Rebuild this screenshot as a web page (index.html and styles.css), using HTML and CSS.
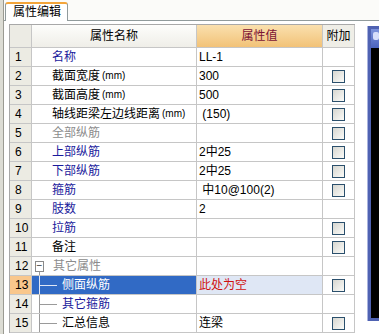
FILE: index.html
```html
<!DOCTYPE html>
<html lang="zh-CN">
<head>
    <meta charset="UTF-8">
    <title>属性编辑</title>
    <link rel="stylesheet" href="styles.css">
</head>
<body>
<div class="window">
    <div class="edge"></div>
    <div class="main">
        <div class="tabbar">
            <div class="tab">属性编辑</div>
        </div>
        <div class="panel">
            <div class="grid">
                <div class="cell head num-h"></div>
                <div class="cell head name-h">属性名称</div>
                <div class="cell head value-h">属性值</div>
                <div class="cell head extra-h">附加</div>

                <div class="cell num">1</div>
                <div class="cell name blue">名称</div>
                <div class="cell value">LL-1</div>
                <div class="cell check"></div>

                <div class="cell num">2</div>
                <div class="cell name">截面宽度<span class="unit">(mm)</span></div>
                <div class="cell value">300</div>
                <div class="cell check"><span class="box"></span></div>

                <div class="cell num">3</div>
                <div class="cell name">截面高度<span class="unit">(mm)</span></div>
                <div class="cell value">500</div>
                <div class="cell check"><span class="box"></span></div>

                <div class="cell num">4</div>
                <div class="cell name">轴线距梁左边线距离<span class="unit">(mm)</span></div>
                <div class="cell value">&nbsp;(150)</div>
                <div class="cell check"><span class="box"></span></div>

                <div class="cell num">5</div>
                <div class="cell name gray">全部纵筋</div>
                <div class="cell value"></div>
                <div class="cell check"><span class="box"></span></div>

                <div class="cell num">6</div>
                <div class="cell name blue">上部纵筋</div>
                <div class="cell value">2中25</div>
                <div class="cell check"><span class="box"></span></div>

                <div class="cell num">7</div>
                <div class="cell name blue">下部纵筋</div>
                <div class="cell value">2中25</div>
                <div class="cell check"><span class="box"></span></div>

                <div class="cell num">8</div>
                <div class="cell name blue">箍筋</div>
                <div class="cell value">&nbsp;中10@100(2)</div>
                <div class="cell check"><span class="box"></span></div>

                <div class="cell num">9</div>
                <div class="cell name blue">肢数</div>
                <div class="cell value">2</div>
                <div class="cell check"></div>

                <div class="cell num">10</div>
                <div class="cell name blue">拉筋</div>
                <div class="cell value"></div>
                <div class="cell check"><span class="box"></span></div>

                <div class="cell num">11</div>
                <div class="cell name">备注</div>
                <div class="cell value"></div>
                <div class="cell check"><span class="box"></span></div>

                <div class="cell num">12</div>
                <div class="cell name gray group"><span class="toggle">−</span>其它属性</div>
                <div class="cell value"></div>
                <div class="cell check"></div>

                <div class="cell num current">13</div>
                <div class="cell name leaf selected"><span class="branch"></span>侧面纵筋</div>
                <div class="cell value selected-value">此处为空</div>
                <div class="cell check"><span class="box"></span></div>

                <div class="cell num">14</div>
                <div class="cell name leaf blue"><span class="branch"></span>其它箍筋</div>
                <div class="cell value"></div>
                <div class="cell check"></div>

                <div class="cell num">15</div>
                <div class="cell name leaf"><span class="branch"></span>汇总信息</div>
                <div class="cell value">连梁</div>
                <div class="cell check"><span class="box"></span></div>
            </div>

            <div class="side">
                <div class="side-title"><span class="side-icon"></span></div>
                <div class="side-body"></div>
            </div>
        </div>
    </div>
</div>
</body>
</html>
```

FILE: styles.css
```css
body {
    margin: 0;
    width: 379px;
    height: 334px;
    overflow: hidden;
    background: #fff;
    font-family: "Liberation Sans", "Noto Sans CJK SC", sans-serif;
    font-size: 12px;
    color: #000;
}
.window {
    display: flex;
    height: 334px;
}
.edge {
    width: 3px;
    background: #dcdcd4;
    border-right: 1px solid #9a9a92;
}
.main {
    flex: 1;
    display: flex;
    flex-direction: column;
}
.tabbar {
    height: 20px;
    display: flex;
    align-items: flex-end;
    padding-left: 1px;
    background: #fbfbf9;
    border-bottom: 1px solid #919b9c;
}
.tab {
    width: 54px;
    height: 17px;
    margin-bottom: -1px;
    padding-left: 7px;
    line-height: 17px;
    background: #fff;
    border: 1px solid #919b9c;
    border-top: 2px solid #f3a53a;
    border-bottom: none;
    border-radius: 3px 3px 0 0;
}
.panel {
    flex: 1;
    display: flex;
    gap: 13px;
    padding: 3px 0 0 5px;
    background: #fff;
}
.grid {
    align-self: flex-start;
    display: grid;
    grid-template-columns: 22px 165px 126px 32px;
    grid-template-rows: 23px;
    grid-auto-rows: 19px;
    border-left: 1px solid #a8a8a8;
    border-top: 1px solid #a8a8a8;
}
.cell {
    box-sizing: border-box;
    border-right: 1px solid #c6c6c6;
    border-bottom: 1px solid #c6c6c6;
    line-height: 18px;
    white-space: nowrap;
    overflow: hidden;
}
.head {
    line-height: 22px;
    text-align: center;
}
.num-h {
    background: #ecebe4;
}
.name-h {
    background: linear-gradient(#fdfdfb, #efeee8);
}
.value-h {
    background: linear-gradient(#fae0ae, #f2c277);
    color: #7c1234;
}
.extra-h {
    background: #efeee7;
}
.num {
    padding-left: 5px;
    background: #ecebe3;
}
.num.current {
    background: #f9c78c;
}
.name {
    display: flex;
    align-items: center;
    padding-left: 20px;
}
.unit {
    font-size: 10px;
    margin-left: 2px;
}
.blue {
    color: #1a1a9c;
}
.gray {
    color: #8c8c8c;
}
.value {
    padding-left: 2px;
}
.check {
    display: flex;
    align-items: center;
    justify-content: center;
}
.box {
    width: 11px;
    height: 11px;
    border: 1px solid #2a4f6c;
    background: linear-gradient(135deg, #d6d6d0, #fbfbf8);
}

/* tree part of the name column */
.name.group {
    padding-left: 3px;
    background: linear-gradient(#9a9a9a, #9a9a9a) 7px 14px / 1px 5px no-repeat;
}
.toggle {
    width: 7px;
    height: 9px;
    margin-right: 9px;
    border: 1px solid #8a8a8a;
    background: #fff;
    color: #333;
    font-size: 10px;
    line-height: 8px;
    text-align: center;
}
.name.leaf {
    padding-left: 0;
}
.branch {
    align-self: stretch;
    width: 30px;
    flex: none;
    background:
        linear-gradient(#9a9a9a, #9a9a9a) 7px 0 / 1px 100% no-repeat,
        linear-gradient(#9a9a9a, #9a9a9a) 7px 9px / 18px 1px no-repeat;
}
.selected {
    background: #316ac5;
    color: #fff;
}
.selected .branch {
    background:
        linear-gradient(#dfe6f5, #dfe6f5) 7px 0 / 1px 100% no-repeat,
        linear-gradient(#dfe6f5, #dfe6f5) 7px 9px / 18px 1px no-repeat;
}
.selected-value {
    background: #dfe7f5;
    color: #d01010;
}

/* docked window cut off at the right */
.side {
    flex: 1;
    height: 289px;
    margin-top: 2px;
    display: flex;
    flex-direction: column;
    border: 3px solid #4f62b2;
    border-right: none;
    box-shadow: -1px 0 0 #a9b3df;
}
.side-title {
    height: 16px;
    background: linear-gradient(#7d93dc, #4b63bd);
    padding: 3px 0 0 2px;
}
.side-icon {
    display: block;
    width: 6px;
    height: 8px;
    background: #d6defa;
    border-radius: 2px;
}
.side-body {
    flex: 1;
    background: #000;
}
```
